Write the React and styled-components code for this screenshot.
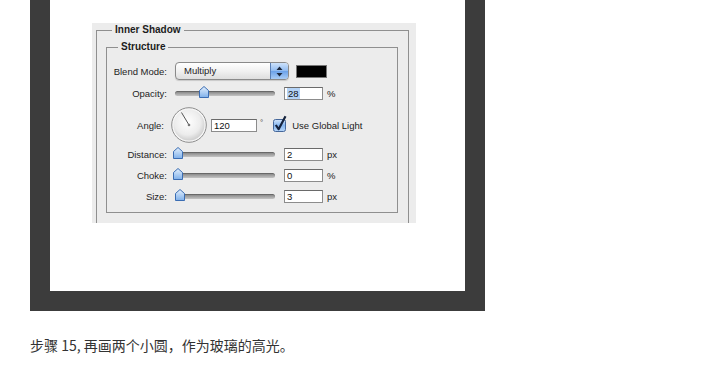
import React from 'react';
import styled, { createGlobalStyle } from 'styled-components';

const GlobalStyle = createGlobalStyle`
  html, body {
    margin: 0;
    padding: 0;
    background: #fff;
  }
  body {
    font-family: "Liberation Sans", Arial, sans-serif;
  }
`;

const Page = styled.div`
  width: 720px;
  height: 369px;
  padding-left: 30px;
  box-sizing: border-box;
  overflow: hidden;
`;

const Frame = styled.div`
  width: 455px;
  height: 311px;
  padding: 0 20px 20px;
  box-sizing: border-box;
  background: #3c3c3c;
`;

const Canvas = styled.div`
  height: 100%;
  padding: 23px 0 0 42px;
  box-sizing: border-box;
  background: #fff;
`;

const Panel = styled.div`
  width: 324px;
  height: 200px;
  padding: 1px 7px 0 4px;
  box-sizing: border-box;
  background: #ececec;
  overflow: hidden;
`;

const GroupHead = styled.div`
  display: flex;
  height: 12px;

  &::before,
  &::after {
    content: '';
    align-self: flex-end;
    height: 6px;
    box-sizing: border-box;
    border-top: 1px solid #8f8f8f;
  }
  &::before {
    width: ${p => p.$lead}px;
    border-left: 1px solid #8f8f8f;
  }
  &::after {
    flex: 1;
    border-right: 1px solid #8f8f8f;
  }
`;

const GroupTitle = styled.span`
  padding: 0 3px;
  font-size: 10px;
  line-height: 12px;
  font-weight: bold;
  color: #1c1c1c;
`;

const GroupBody = styled.div`
  border: 1px solid #8f8f8f;
  border-top: none;
  padding: ${p => p.$pad};
`;

const Row = styled.div`
  display: flex;
  align-items: center;
  height: ${p => p.$h}px;
  margin-top: ${p => p.$mt || 0}px;
`;

const Label = styled.span`
  flex: none;
  width: 60px;
  margin-right: 8px;
  padding-right: ${p => p.$inset || 0}px;
  box-sizing: border-box;
  text-align: right;
  font-size: 9.5px;
  color: #1e1e1e;
`;

const Select = styled.div`
  display: flex;
  width: 114px;
  height: 18px;
  box-sizing: border-box;
  border: 1px solid #8a8a8a;
  border-radius: 4px;
  overflow: hidden;
  background: linear-gradient(#ffffff, #f1f1f1 50%, #dedede);
  box-shadow: 0 1px 1px rgba(0, 0, 0, 0.15);
`;

const SelectText = styled.span`
  flex: 1;
  padding-left: 8px;
  font-size: 9.5px;
  line-height: 16px;
  color: #1c1c1c;
`;

const Stepper = styled.span`
  display: flex;
  align-items: center;
  justify-content: center;
  width: 17px;
  border-left: 1px solid #5a7fb5;
  background: linear-gradient(#cde2fb, #8fbaf0 50%, #6aa1ea 51%, #a9ccf5);
`;

const Swatch = styled.div`
  width: 31px;
  height: 13px;
  margin-left: 7px;
  box-sizing: border-box;
  background: #000;
  border: 1px solid #777;
`;

const Slider = styled.div`
  position: relative;
  display: flex;
  align-items: center;
  width: 100px;
  height: 14px;
`;

const Track = styled.div`
  width: 100%;
  height: 5px;
  border-radius: 3px;
  background: linear-gradient(#7c7c7c, #a8a8a8 60%, #c4c4c4);
  box-shadow: inset 0 1px 0 rgba(0, 0, 0, 0.2);
`;

const Thumb = styled.svg`
  position: absolute;
  left: ${p => p.$pos - 5}px;
  top: 0;
`;

const Field = styled.div`
  width: ${p => p.$w}px;
  height: 13px;
  margin-left: ${p => p.$ml}px;
  padding-left: 2px;
  box-sizing: border-box;
  border: 1px solid #8c8c8c;
  border-top-color: #6a6a6a;
  background: #fff;
  font-size: 9.5px;
  line-height: 11px;
  color: #111;
`;

const Selected = styled.span`
  background: #b4d3f7;
  padding: 0 1px;
`;

const Unit = styled.span`
  margin-left: 4px;
  font-size: 9.5px;
  color: #222;
`;

const Dial = styled.svg`
  flex: none;
  margin-left: -4px;
`;

const Degree = styled.span`
  align-self: flex-start;
  margin: 11px 0 0 3px;
  font-size: 8px;
  color: #444;
`;

const Check = styled.svg`
  margin-left: 10px;
  margin-top: -3px;
`;

const CheckText = styled.span`
  margin-left: 4px;
  font-size: 9.5px;
  color: #1c1c1c;
`;

const Caption = styled.p`
  margin: 24px 0 0;
  font-family: "Noto Sans CJK SC", sans-serif;
  font-size: 14px;
  line-height: 20px;
  color: #333;
`;

const Group = ({ title, lead, pad, children }) => (
  <div>
    <GroupHead $lead={lead}>
      <GroupTitle>{title}</GroupTitle>
    </GroupHead>
    <GroupBody $pad={pad}>{children}</GroupBody>
  </div>
);

const ThumbIcon = ({ pos }) => (
  <Thumb $pos={pos} width="10" height="12" viewBox="0 0 10 12">
    <defs>
      <linearGradient id={`tg${pos}`} x1="0" y1="0" x2="0" y2="1">
        <stop offset="0" stopColor="#e4f0fd" />
        <stop offset="1" stopColor="#7fb0ea" />
      </linearGradient>
    </defs>
    <path d="M5 0.5 L9.5 4.5 V11.5 H0.5 V4.5 Z" fill={`url(#tg${pos})`} stroke="#3b6db3" />
  </Thumb>
);

const SliderRow = ({ label, pos, value, unit, mt, selected }) => (
  <Row $h={14} $mt={mt}>
    <Label>{label}</Label>
    <Slider>
      <Track />
      <ThumbIcon pos={pos} />
    </Slider>
    <Field $w={39} $ml={9}>{selected ? <Selected>{value}</Selected> : value}</Field>
    <Unit>{unit}</Unit>
  </Row>
);

export default function App() {
  return (
    <Page>
      <GlobalStyle />
      <Frame>
        <Canvas>
          <Panel>
            <Group title="Inner Shadow" lead={16} pad="5px 10px 20px 9px">
              <Group title="Structure" lead={12} pad="9px 0 9px 0">
                <Row $h={18}>
                  <Label>Blend Mode:</Label>
                  <Select>
                    <SelectText>Multiply</SelectText>
                    <Stepper>
                      <svg width="7" height="11" viewBox="0 0 7 11">
                        <path d="M3.5 0.5 L6.5 4 H0.5 Z M3.5 10.5 L6.5 7 H0.5 Z" fill="#1d2a40" />
                      </svg>
                    </Stepper>
                  </Select>
                  <Swatch />
                </Row>
                <SliderRow label="Opacity:" pos={29} value="28" unit="%" mt={6} selected />
                <Row $h={36} $mt={7}>
                  <Label $inset={3}>Angle:</Label>
                  <Dial width="36" height="36" viewBox="0 0 36 36">
                    <defs>
                      <radialGradient id="dialFill" cx="0.45" cy="0.4" r="0.6">
                        <stop offset="0" stopColor="#ffffff" />
                        <stop offset="0.7" stopColor="#ececec" />
                        <stop offset="1" stopColor="#cfcfcf" />
                      </radialGradient>
                    </defs>
                    <circle cx="18" cy="18" r="17.3" fill="#f6f6f6" stroke="#8d8d8d" strokeWidth="1" />
                    <circle cx="18" cy="18" r="15.5" fill="url(#dialFill)" />
                    <line x1="18" y1="18" x2="10.5" y2="5.5" stroke="#555" strokeWidth="1" />
                    <circle cx="18" cy="18" r="1.3" fill="#777" />
                  </Dial>
                  <Field $w={46} $ml={4}>120</Field>
                  <Degree>°</Degree>
                  <Check width="15" height="17" viewBox="0 0 15 17">
                    <defs>
                      <linearGradient id="boxFill" x1="0" y1="0" x2="0" y2="1">
                        <stop offset="0" stopColor="#d3e6fc" />
                        <stop offset="0.5" stopColor="#86b6ef" />
                        <stop offset="1" stopColor="#b7d6f8" />
                      </linearGradient>
                    </defs>
                    <rect x="0.5" y="4.5" width="12" height="12" rx="2" fill="url(#boxFill)" stroke="#45679a" />
                    <path d="M2.8 10 L5.6 14.2 L12.5 1.2" fill="none" stroke="#15233d" strokeWidth="2.2" strokeLinejoin="round" />
                  </Check>
                  <CheckText>Use Global Light</CheckText>
                </Row>
                <SliderRow label="Distance:" pos={3} value="2" unit="px" mt={4} />
                <SliderRow label="Choke:" pos={3} value="0" unit="%" mt={7} />
                <SliderRow label="Size:" pos={5} value="3" unit="px" mt={7} />
              </Group>
            </Group>
          </Panel>
        </Canvas>
      </Frame>
      <Caption>步骤 15, 再画两个小圆，作为玻璃的高光。</Caption>
    </Page>
  );
}
